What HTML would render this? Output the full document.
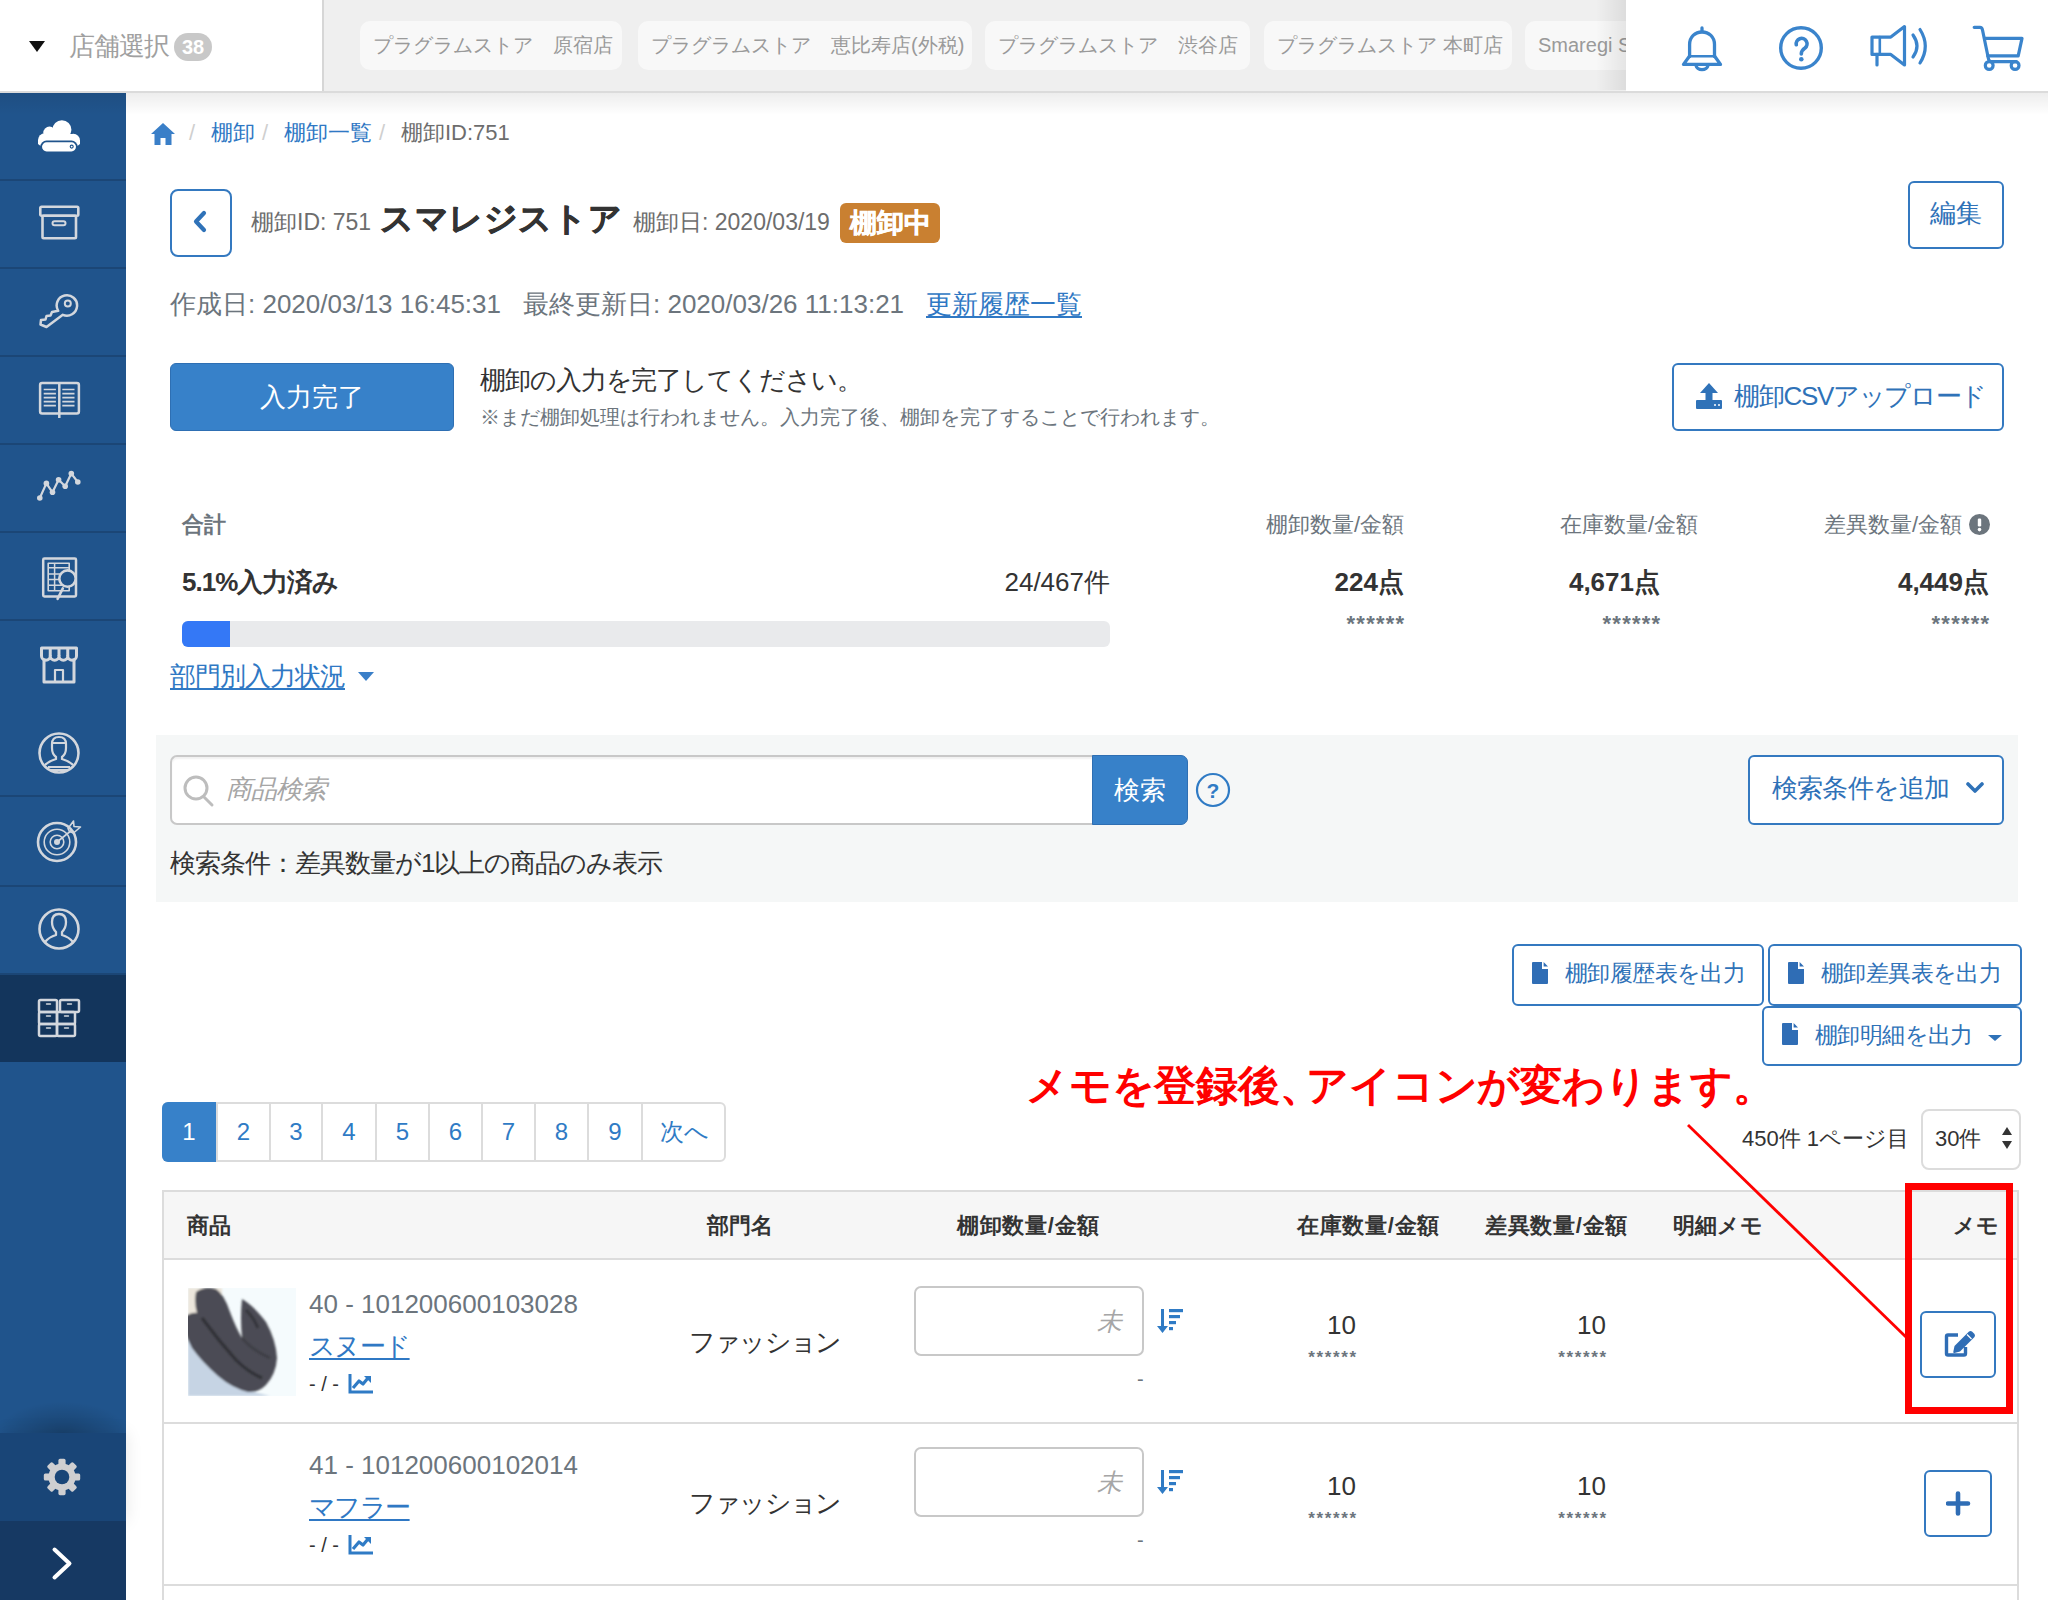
<!DOCTYPE html>
<html><head><meta charset="utf-8">
<style>
*{box-sizing:border-box;margin:0;padding:0}
html,body{width:2048px;height:1600px;overflow:hidden;background:#fff}
body{font-family:"Liberation Sans",sans-serif;color:#333;position:relative}
.a{position:absolute;white-space:nowrap}
.blue{color:#2f78c4}
.gray{color:#6d757d}
/* header */
#hdr{position:absolute;left:0;top:0;width:2048px;height:93px;background:#fff;border-bottom:2px solid #dbdbdb;z-index:5}
#hdrshadow{position:absolute;left:0;top:93px;width:2048px;height:22px;background:linear-gradient(#00000012,#00000000);z-index:4}
#tabs{position:absolute;left:322px;top:0;width:1304px;height:91px;background:#efefef;border-left:2px solid #d6d6d6;overflow:hidden}
.chip{position:absolute;top:21px;height:49px;background:#f8f8f8;border-radius:10px;color:#9a9a9a;font-size:20px;line-height:49px;padding-left:13px}
#tabfade{position:absolute;right:0;top:0;width:30px;height:90px;background:linear-gradient(90deg,rgba(0,0,0,0),rgba(0,0,0,0.08))}
/* sidebar */
#side{position:absolute;left:0;top:93px;width:126px;height:1507px;background:#20548c;z-index:3}
.sitem{position:absolute;left:0;width:126px;height:88px;border-bottom:2px solid #1b4676}
.sitem svg{position:absolute;left:33px;top:17px}
/* buttons */
.obtn{position:absolute;border:2px solid #3479c0;border-radius:6px;background:#fff;color:#2f72b8}
.th{font-size:22px;line-height:30px;color:#333;font-weight:bold}
</style></head>
<body>
<div id="hdr">
  <div class="a" style="left:29px;top:41px;width:0;height:0;border-left:8px solid transparent;border-right:8px solid transparent;border-top:11px solid #111"></div>
  <div class="a" style="left:69px;top:30px;font-size:26px;color:#a0a0a0;line-height:32px;letter-spacing:-1px">店舗選択</div>
  <div class="a" style="left:174px;top:33px;width:38px;height:28px;border-radius:14px;background:#c8c8c8;color:#fff;font-weight:bold;font-size:20px;line-height:28px;text-align:center">38</div>
  <div id="tabs">
    <div class="chip" style="left:36px;width:262px">プラグラムストア　原宿店</div>
    <div class="chip" style="left:314px;width:334px">プラグラムストア　恵比寿店(外税)</div>
    <div class="chip" style="left:661px;width:265px">プラグラムストア　渋谷店</div>
    <div class="chip" style="left:940px;width:248px">プラグラムストア 本町店</div>
    <div class="chip" style="left:1201px;width:200px">Smaregi Store</div>
    <div id="tabfade"></div>
  </div>
</div>
<div id="hdrshadow"></div>

<div id="side">
  <div class="sitem" style="top:0"><svg width="46" height="38" viewBox="0 0 46 38" style="left:36px;top:24px"><g fill="#fff"><circle cx="25.9" cy="12.8" r="9.5"/><circle cx="13.5" cy="15.8" r="6.2"/><circle cx="8.8" cy="23" r="6.8"/><circle cx="37.3" cy="23.5" r="6.7"/><rect x="8" y="17" width="30" height="11"/><path d="M2 23 H44 V27 L40 30 H6 L2 27 Z"/></g><rect x="4.3" y="23.6" width="37.4" height="12.4" rx="6.2" fill="#20548c"/><rect x="6" y="25.3" width="34" height="9.1" rx="4.55" fill="#fff"/><circle cx="35.7" cy="29.6" r="1.5" fill="none" stroke="#20548c" stroke-width="1.1"/></svg></div>
  <div class="sitem" style="top:88px"><svg width="44" height="38" viewBox="0 0 44 38" style="left:37px;top:23px" fill="none" stroke="#d3d7dd" stroke-width="2.6" stroke-linejoin="round"><rect x="3.3" y="2.8" width="38" height="9" rx="1.2"/><rect x="5.5" y="11.8" width="33.5" height="22.5" rx="1.2"/><rect x="15.5" y="17.3" width="13" height="4" rx="2" stroke-width="2"/></svg></div>
  <div class="sitem" style="top:176px"><svg width="44" height="38" viewBox="0 0 44 38" style="left:37px;top:24px" fill="none" stroke="#d3d7dd" stroke-width="2.5" stroke-linejoin="round"><path d="M9.5 34 L3.5 31.5 L4 27 L8.5 26.5 L9.5 23 L13.5 22.5 L15 19 L21.2 17.8 A10.2 10.2 0 1 1 25.8 21.8 Z"/><circle cx="30.8" cy="10.6" r="3" stroke-width="2"/></svg></div>
  <div class="sitem" style="top:264px"><svg width="44" height="40" viewBox="0 0 44 40" style="left:37px;top:24px" fill="none" stroke="#d3d7dd" stroke-width="2.5" stroke-linejoin="round"><rect x="3.1" y="2" width="38.8" height="30.5" rx="2"/><path d="M22.3 1.5 V37"/><g stroke-width="1.7"><path d="M6.7 8.5H18.9M6.7 12.6H18.9M6.7 16.6H18.9M6.7 20.6H18.9M6.7 24.6H18.9M25.3 8.5H37.5M25.3 12.6H37.5M25.3 16.6H37.5M25.3 20.6H37.5M25.3 24.6H37.5"/></g></svg></div>
  <div class="sitem" style="top:352px"><svg width="46" height="34" viewBox="0 0 46 34" style="left:36px;top:25px" fill="none" stroke="#d3d7dd" stroke-width="2.2" stroke-linejoin="round"><polyline points="3.8,28 10.4,13.4 16.5,22.3 22.6,9.7 29.2,16.3 35.3,3.6 41.8,12"/><g fill="#d3d7dd" stroke="none"><circle cx="3.8" cy="28" r="2.8"/><circle cx="10.4" cy="13.4" r="2.8"/><circle cx="16.5" cy="22.3" r="2.8"/><circle cx="22.6" cy="9.7" r="2.8"/><circle cx="29.2" cy="16.3" r="2.8"/><circle cx="35.3" cy="3.6" r="2.8"/><circle cx="41.8" cy="12" r="2.8"/></g></svg></div>
  <div class="sitem" style="top:440px"><svg width="40" height="46" viewBox="0 0 40 46" style="left:40px;top:23px" fill="none" stroke="#d3d7dd" stroke-linejoin="round"><rect x="3.2" y="2.5" width="32.8" height="38" rx="1.2" stroke-width="2.5"/><rect x="8.2" y="7.2" width="21" height="27.6" stroke-width="1.6"/><path d="M14.6 7.2V34.8M8.2 11.8H29.2M8.2 17.9H29.2M8.2 23.5H29.2M8.2 29.2H29.2" stroke-width="1.5"/><circle cx="27.5" cy="22.6" r="8.2" fill="#20548c" stroke-width="2.6"/><path d="M22.8 32.4 L17.6 42.8" stroke-width="2.6" stroke-linecap="round"/></svg></div>
  <div class="sitem" style="top:528px;border-bottom-color:#20548c"><svg width="44" height="42" viewBox="0 0 44 42" style="left:37px;top:24px" fill="none" stroke="#d3d7dd" stroke-width="3" stroke-linejoin="round"><path d="M4.5 3 H39.5 V11 A4.375 4.2 0 0 1 30.75 11 A4.375 4.2 0 0 1 22 11 A4.375 4.2 0 0 1 13.25 11 A4.375 4.2 0 0 1 4.5 11 Z"/><path d="M13.25 3V11M22 3V11M30.75 3V11"/><path d="M7 13.5 V37 H37 V13.5"/><path d="M18 37 V25 H26 V37" stroke-width="2.2"/></svg></div>
  <div class="sitem" style="top:616px"><svg width="44" height="46" viewBox="0 0 44 46" style="left:37px;top:22px" fill="none" stroke="#d3d7dd" stroke-width="2.6"><circle cx="22" cy="22" r="19.5"/><path d="M15 13 Q15 6 22 6 Q29 6 29 13 L29 17 Q29 23 25 26 L25 28 Q32 30 36 34 M15 13 L15 17 Q15 23 19 26 L19 28 Q12 30 8 34" stroke-width="2.2"/><path d="M15 12 H29" stroke-width="2"/><path d="M11 36 H33 M12 39 H32" stroke-width="1.8"/></svg></div>
  <div class="sitem" style="top:706px"><svg width="46" height="44" viewBox="0 0 46 44" style="left:36px;top:20px" fill="none" stroke="#d3d7dd" stroke-width="2.6"><circle cx="21" cy="23" r="19"/><circle cx="21" cy="23" r="12.8" stroke-width="1.6"/><circle cx="21" cy="23" r="6.8" stroke-width="1.6"/><circle cx="21" cy="23" r="3" fill="#d3d7dd" stroke="none"/><path d="M21 23 L36 11" stroke-width="1.7"/><path d="M32 9.5 L37.5 2 L38 7.5 L44.5 8 L37.5 14 L33.5 12.5 Z" stroke-width="1.6" stroke-linejoin="round"/></svg></div>
  <div class="sitem" style="top:794px"><svg width="44" height="46" viewBox="0 0 44 46" style="left:37px;top:20px" fill="none" stroke="#d3d7dd" stroke-width="2.6"><circle cx="22" cy="22" r="19.5"/><path d="M8 35 Q12 30 19 28 L19 25 Q15 21 15 15 Q15 7 22 7 Q29 7 29 15 Q29 21 25 25 L25 28 Q32 30 36 35" stroke-width="2.3" stroke-linejoin="round"/></svg></div>
  <div class="sitem" style="top:882px;height:87px;background:#13355c;border-bottom:none"><svg width="44" height="42" viewBox="0 0 44 42" style="left:37px;top:23px" fill="none" stroke="#d3d7dd" stroke-width="2.5" stroke-linejoin="round"><rect x="2" y="2" width="18" height="12" rx="1.5"/><rect x="23" y="2" width="19" height="12" rx="1.5"/><rect x="2" y="14" width="18" height="12" rx="1.5"/><rect x="20" y="14" width="18" height="12" rx="1.5"/><rect x="2" y="26" width="18" height="12" rx="1.5"/><rect x="20" y="26" width="18" height="12" rx="1.5"/><path d="M9.5 6H13.5M30.5 6H34.5M9.5 18H13.5M27.5 18H31.5M9.5 30H13.5M27.5 30H31.5" stroke-width="1.4" stroke-linecap="round"/></svg></div>
  <div style="position:absolute;left:0;top:1298px;width:126px;height:42px;background:radial-gradient(ellipse 70% 100% at 50% 100%,rgba(0,0,0,0.22),rgba(0,0,0,0) 75%)"></div>
  <div style="position:absolute;left:0;top:1340px;width:126px;height:88px;background:#194577;box-shadow:0 0 16px rgba(0,0,0,0.10)"><svg width="40" height="40" viewBox="-20 -20 40 40" style="position:absolute;left:42px;top:24px"><g fill="#cfcfd1"><circle r="13.6"/><rect x="-3.6" y="-18.2" width="7.2" height="9" rx="1.6" transform="rotate(0)"/><rect x="-3.6" y="-18.2" width="7.2" height="9" rx="1.6" transform="rotate(45)"/><rect x="-3.6" y="-18.2" width="7.2" height="9" rx="1.6" transform="rotate(90)"/><rect x="-3.6" y="-18.2" width="7.2" height="9" rx="1.6" transform="rotate(135)"/><rect x="-3.6" y="-18.2" width="7.2" height="9" rx="1.6" transform="rotate(180)"/><rect x="-3.6" y="-18.2" width="7.2" height="9" rx="1.6" transform="rotate(225)"/><rect x="-3.6" y="-18.2" width="7.2" height="9" rx="1.6" transform="rotate(270)"/><rect x="-3.6" y="-18.2" width="7.2" height="9" rx="1.6" transform="rotate(315)"/></g><circle r="7.3" fill="#194577"/></svg></div>
  <div style="position:absolute;left:0;top:1428px;width:126px;height:79px;background:#163963"><svg width="30" height="40" viewBox="0 0 30 40" style="position:absolute;left:47px;top:22px"><path d="M7.5 6.5 L22.5 20.5 L7.5 34.5" fill="none" stroke="#fff" stroke-width="4" stroke-linecap="round" stroke-linejoin="round"/></svg></div>
</div>


<!-- header icons -->
<div class="a" style="left:1626px;top:0;width:422px;height:90px;background:#fff;z-index:6">
 <svg width="44" height="48" viewBox="0 0 44 48" style="position:absolute;left:54px;top:26px" fill="none" stroke="#3a84cc" stroke-width="3.3" stroke-linejoin="round" stroke-linecap="round"><path d="M22 2 V5.5"/><path d="M9.6 30.5 V18.5 C9.6 11 15 6 22 6 C29 6 34.5 11 34.5 18.5 V30.5"/><path d="M10 30.3 H34" stroke-width="2.4"/><path d="M9.6 30 L3.5 38.4 H40.5 L34.5 30"/><path d="M15.8 39 A6.3 5.6 0 0 0 28.2 39"/></svg>
 <svg width="48" height="50" viewBox="0 0 48 50" style="position:absolute;left:151px;top:23px" fill="none" stroke="#3a84cc" stroke-width="3.4"><circle cx="24" cy="25" r="20.3"/><path d="M19.3 21.8 A5.4 5.4 0 1 1 28 25 Q24.3 27.5 24.3 31" stroke-linecap="round" stroke-width="3.6"/><circle cx="24.3" cy="36.2" r="2.3" fill="#3a84cc" stroke="none"/></svg>
 <svg width="64" height="48" viewBox="0 0 64 48" style="position:absolute;left:243px;top:23px" fill="none" stroke="#3a84cc" stroke-width="3.2" stroke-linejoin="round" stroke-linecap="round"><path d="M3 14.1 H21.8 L35.5 3.6 V41.9 L21.8 31.4 H3 Z"/><path d="M10.8 14.1 V31.4" stroke-width="2.6"/><path d="M8 31.4 V42"/><path d="M44 12 Q52 23.2 44 34"/><path d="M51 6.5 Q61.6 23.2 51 40"/></svg>
 <svg width="56" height="50" viewBox="0 0 56 50" style="position:absolute;left:346px;top:24px" fill="none" stroke="#3a84cc" stroke-width="3.2" stroke-linejoin="round" stroke-linecap="round"><path d="M2.2 3.3 H8 Q10 3.3 10.5 6 L16.5 35 Q17 37.6 19.5 37.6 H44.4"/><path d="M12.8 14.3 H50 L46.2 31.9 H15.8"/><circle cx="17.2" cy="41.5" r="3.9"/><circle cx="43.1" cy="41.5" r="3.9"/></svg>
</div>

<!-- breadcrumb -->
<svg width="26" height="24" viewBox="0 0 26 24" style="position:absolute;left:150px;top:122px"><path d="M13 1 L25 12 H21.5 V23 H15.5 V16 H10.5 V23 H4.5 V12 H1 Z" fill="#3a7fc8"/></svg>
<div class="a" style="left:189px;top:119px;font-size:22px;line-height:28px;color:#cfcfcf">/</div>
<div class="a blue" style="left:211px;top:119px;font-size:22px;line-height:28px">棚卸</div>
<div class="a" style="left:262px;top:119px;font-size:22px;line-height:28px;color:#cfcfcf">/</div>
<div class="a blue" style="left:284px;top:119px;font-size:22px;line-height:28px">棚卸一覧</div>
<div class="a" style="left:379px;top:119px;font-size:22px;line-height:28px;color:#cfcfcf">/</div>
<div class="a" id="bc3" style="left:401px;top:119px;font-size:22px;line-height:28px;color:#6d6d6d">棚卸ID:751</div>

<!-- title row -->
<div class="obtn" style="left:170px;top:189px;width:62px;height:68px;border-radius:8px"><svg width="16" height="24" viewBox="0 0 16 24" style="position:absolute;left:20px;top:19px"><path d="M12 3 L4 11.5 L12 20" fill="none" stroke="#2f72b8" stroke-width="4.2" stroke-linecap="round" stroke-linejoin="round"/></svg></div>
<div class="a" id="t1" style="left:251px;top:207px;font-size:23px;line-height:30px;color:#6d6d6d">棚卸ID: 751</div>
<div class="a" id="t2" style="left:380px;top:199px;font-size:33px;line-height:40px;color:#333;font-weight:bold;letter-spacing:0.6px;-webkit-text-stroke:0.7px #333">スマレジストア</div>
<div class="a" id="t3" style="left:633px;top:207px;font-size:23px;line-height:30px;color:#6d6d6d">棚卸日: 2020/03/19</div>
<div class="a" style="left:840px;top:203px;width:100px;height:40px;background:#c98031;border-radius:6px;color:#fff;font-weight:bold;font-size:27px;line-height:40px;text-align:center;-webkit-text-stroke:0.5px #fff">棚卸中</div>
<div class="obtn" style="left:1908px;top:181px;width:96px;height:68px;font-size:26px;line-height:61px;text-align:center">編集</div>

<!-- dates -->
<div class="a" id="d1" style="left:170px;top:288px;font-size:26px;line-height:32px;color:#6c757d">作成日: 2020/03/13 16:45:31</div>
<div class="a" id="d2" style="left:523px;top:288px;font-size:26px;line-height:32px;color:#6c757d">最終更新日: 2020/03/26 11:13:21</div>
<div class="a blue" id="d3" style="left:926px;top:288px;font-size:26px;line-height:32px;text-decoration:underline;text-underline-offset:3px">更新履歴一覧</div>

<!-- complete -->
<div class="a" style="left:170px;top:363px;width:284px;height:68px;background:#3781c9;border:1px solid #2e6fb3;border-radius:6px;color:#fff;font-size:26px;line-height:66px;text-align:center">入力完了</div>
<div class="a" style="left:480px;top:364px;font-size:26px;line-height:32px;color:#333;letter-spacing:-1.1px">棚卸の入力を完了してください。</div>
<div class="a" id="note" style="left:480px;top:404px;font-size:19.7px;line-height:26px;color:#6c757d">※まだ棚卸処理は行われません。入力完了後、棚卸を完了することで行われます。</div>
<div class="obtn" style="left:1672px;top:363px;width:332px;height:68px;">
 <svg width="28" height="28" viewBox="0 0 28 28" style="position:absolute;left:21px;top:17px"><path d="M14 1 L23 11 H17.5 V20 H10.5 V11 H5 Z" fill="#2f72b8"/><rect x="1" y="18" width="26" height="9" rx="1" fill="#2f72b8"/><circle cx="20" cy="23" r="1" fill="#fff"/><circle cx="24" cy="23" r="1" fill="#fff"/></svg>
 <div class="a" id="csv" style="left:60px;top:13px;font-size:26px;letter-spacing:-1.3px;line-height:36px;color:#2f72b8">棚卸CSVアップロード</div>
</div>

<!-- summary -->
<div class="a" style="left:182px;top:511px;font-size:22px;line-height:28px;color:#6c757d;font-weight:bold">合計</div>
<div class="a" id="s1" style="left:182px;top:566px;font-size:26px;letter-spacing:-1px;line-height:32px;color:#333;font-weight:bold">5.1%入力済み</div>
<div class="a" id="s2" style="right:938px;top:566px;font-size:26px;line-height:32px;color:#333">24/467件</div>
<div class="a" style="left:182px;top:621px;width:928px;height:26px;background:#e9eaec;border-radius:6px;overflow:hidden"><div style="width:48px;height:26px;background:#3478f6"></div></div>
<div class="a blue" style="left:170px;top:660px;font-size:26px;line-height:32px;text-decoration:underline;text-underline-offset:3px;letter-spacing:-1px">部門別入力状況</div>
<div class="a" style="left:358px;top:672px;width:0;height:0;border-left:8px solid transparent;border-right:8px solid transparent;border-top:9px solid #3a7fc8"></div>

<div class="a" id="h1" style="right:644px;top:511px;font-size:22px;line-height:28px;color:#6c757d">棚卸数量/金額</div>
<div class="a" id="v1" style="right:644px;top:566px;font-size:26px;line-height:32px;color:#333;font-weight:bold">224点</div>
<div class="a" style="right:644px;top:612px;font-size:22px;line-height:24px;color:#6c757d;font-weight:bold;letter-spacing:1.2px;margin-right:-1.2px">******</div>
<div class="a" id="h2" style="right:350px;top:511px;font-size:22px;line-height:28px;color:#6c757d">在庫数量/金額</div>
<div class="a" id="v2" style="right:388px;top:566px;font-size:26px;line-height:32px;color:#333;font-weight:bold">4,671点</div>
<div class="a" style="right:388px;top:612px;font-size:22px;line-height:24px;color:#6c757d;font-weight:bold;letter-spacing:1.2px;margin-right:-1.2px">******</div>
<div class="a" id="h3" style="right:86px;top:511px;font-size:22px;line-height:28px;color:#6c757d">差異数量/金額</div>
<svg width="21" height="21" viewBox="0 0 21 21" style="position:absolute;left:1969px;top:514px"><circle cx="10.5" cy="10.5" r="10.5" fill="#6c757d"/><rect x="8.8" y="4.5" width="3.4" height="8" rx="1.2" fill="#fff"/><circle cx="10.5" cy="15.6" r="1.8" fill="#fff"/></svg>
<div class="a" id="v3" style="right:59px;top:566px;font-size:26px;line-height:32px;color:#333;font-weight:bold">4,449点</div>
<div class="a" style="right:59px;top:612px;font-size:22px;line-height:24px;color:#6c757d;font-weight:bold;letter-spacing:1.2px;margin-right:-1.2px">******</div>

<!-- search panel -->
<div class="a" style="left:156px;top:735px;width:1862px;height:167px;background:#f5f7f7"></div>
<div class="a" style="left:170px;top:755px;width:924px;height:70px;background:#fff;border:2px solid #c8c8c8;border-right:none;border-radius:7px 0 0 7px;box-shadow:inset 0 2px 2px rgba(0,0,0,0.06)"></div>
<svg width="32" height="34" viewBox="0 0 32 34" style="position:absolute;left:183px;top:775px" fill="none" stroke="#bdbdbd" stroke-width="3"><circle cx="13" cy="13" r="11"/><path d="M21 22 L29 30" stroke-linecap="round"/></svg>
<div class="a" style="left:226px;top:773px;font-size:26px;line-height:32px;color:#a6a6a6;font-style:italic;letter-spacing:-1px">商品検索</div>
<div class="a" style="left:1092px;top:755px;width:96px;height:70px;background:#3781c9;border:1px solid #2e6fb3;border-radius:0 7px 7px 0;color:#fff;font-size:26px;line-height:68px;text-align:center">検索</div>
<svg width="36" height="36" viewBox="0 0 36 36" style="position:absolute;left:1195px;top:772px"><circle cx="18" cy="18" r="16" fill="none" stroke="#2f7bc5" stroke-width="2.2"/><text x="18" y="26" text-anchor="middle" font-family="Liberation Sans" font-size="21" font-weight="bold" fill="#2f7bc5">?</text></svg>
<div class="obtn" style="left:1748px;top:755px;width:256px;height:70px">
 <div class="a" id="addc" style="left:22px;top:15px;font-size:26px;letter-spacing:-0.8px;line-height:32px;color:#2f72b8">検索条件を追加</div>
 <svg width="18" height="14" viewBox="0 0 18 14" style="position:absolute;left:216px;top:24px"><path d="M2 3 L9 10 L16 3" fill="none" stroke="#2f72b8" stroke-width="3.6" stroke-linecap="round" stroke-linejoin="round"/></svg>
</div>
<div class="a" id="cond" style="left:170px;top:847px;font-size:26px;line-height:32px;color:#333;letter-spacing:-1px">検索条件：差異数量が1以上の商品のみ表示</div>

<!-- export -->
<div class="obtn" style="left:1512px;top:944px;width:252px;height:62px">
 <svg width="18" height="24" viewBox="0 0 18 24" style="position:absolute;left:17px;top:15px"><path d="M1 2 Q1 1 2 1 H11 V8 H17 V22 Q17 23 16 23 H2 Q1 23 1 22 Z" fill="#2f6db5"/><path d="M12.6 1 L17 5.6 H12.6 Z" fill="#2f6db5"/></svg>
 <div class="a" id="e1" style="left:51px;top:12px;font-size:23px;line-height:30px;color:#2f72b8;letter-spacing:-0.6px">棚卸履歴表を出力</div>
</div>
<div class="obtn" style="left:1768px;top:944px;width:254px;height:62px">
 <svg width="18" height="24" viewBox="0 0 18 24" style="position:absolute;left:17px;top:15px"><path d="M1 2 Q1 1 2 1 H11 V8 H17 V22 Q17 23 16 23 H2 Q1 23 1 22 Z" fill="#2f6db5"/><path d="M12.6 1 L17 5.6 H12.6 Z" fill="#2f6db5"/></svg>
 <div class="a" id="e2" style="left:51px;top:12px;font-size:23px;line-height:30px;color:#2f72b8;letter-spacing:-0.6px">棚卸差異表を出力</div>
</div>
<div class="obtn" style="left:1762px;top:1006px;width:260px;height:60px">
 <svg width="18" height="24" viewBox="0 0 18 24" style="position:absolute;left:17px;top:14px"><path d="M1 2 Q1 1 2 1 H11 V8 H17 V22 Q17 23 16 23 H2 Q1 23 1 22 Z" fill="#2f6db5"/><path d="M12.6 1 L17 5.6 H12.6 Z" fill="#2f6db5"/></svg>
 <div class="a" id="e3" style="left:51px;top:12px;font-size:23px;line-height:30px;color:#2f72b8;letter-spacing:-0.6px">棚卸明細を出力</div>
 <div class="a" style="left:224px;top:27px;width:0;height:0;border-left:7px solid transparent;border-right:7px solid transparent;border-top:6px solid #2f72b8"></div>
</div>

<!-- annotation -->
<div class="a" id="ann" style="left:1026px;top:1058px;font-size:42px;letter-spacing:-0.25px;line-height:56px;color:#ff0000;font-weight:bold">メモを登録後<span style="margin-right:-15px">、</span>アイコンが変わります。</div>

<!-- pagination -->
<div class="a" style="left:162px;top:1102px;width:564px;height:60px;border:2px solid #dcdcdc;border-radius:6px;background:#fff"></div>
<div class="a" style="left:162px;top:1102px;width:54px;height:60px;background:#3781c9;border-radius:6px 0 0 6px;color:#fff;font-size:24px;line-height:60px;text-align:center;z-index:1">1</div>
<div class="a" style="left:216px;top:1102px;width:53px;height:60px;border-left:2px solid #dcdcdc;color:#2f7bc5;font-size:24px;line-height:60px;text-align:center">2</div>
<div class="a" style="left:269px;top:1102px;width:52px;height:60px;border-left:2px solid #dcdcdc;color:#2f7bc5;font-size:24px;line-height:60px;text-align:center">3</div>
<div class="a" style="left:321px;top:1102px;width:54px;height:60px;border-left:2px solid #dcdcdc;color:#2f7bc5;font-size:24px;line-height:60px;text-align:center">4</div>
<div class="a" style="left:375px;top:1102px;width:53px;height:60px;border-left:2px solid #dcdcdc;color:#2f7bc5;font-size:24px;line-height:60px;text-align:center">5</div>
<div class="a" style="left:428px;top:1102px;width:53px;height:60px;border-left:2px solid #dcdcdc;color:#2f7bc5;font-size:24px;line-height:60px;text-align:center">6</div>
<div class="a" style="left:481px;top:1102px;width:53px;height:60px;border-left:2px solid #dcdcdc;color:#2f7bc5;font-size:24px;line-height:60px;text-align:center">7</div>
<div class="a" style="left:534px;top:1102px;width:53px;height:60px;border-left:2px solid #dcdcdc;color:#2f7bc5;font-size:24px;line-height:60px;text-align:center">8</div>
<div class="a" style="left:587px;top:1102px;width:54px;height:60px;border-left:2px solid #dcdcdc;color:#2f7bc5;font-size:24px;line-height:60px;text-align:center">9</div>
<div class="a" style="left:641px;top:1102px;width:85px;height:60px;border-left:2px solid #dcdcdc;color:#2f7bc5;font-size:24px;line-height:60px;text-align:center">次へ</div>

<div class="a" id="cnt" style="left:1742px;top:1124px;font-size:22px;line-height:30px;color:#333">450件 1ページ目</div>
<div class="a" style="left:1921px;top:1109px;width:100px;height:61px;border:2px solid #dcdcdc;border-radius:8px;background:#fff">
 <div class="a" style="left:12px;top:13px;font-size:22px;line-height:30px;color:#333">30件</div>
 <svg width="14" height="28" viewBox="0 0 14 28" style="position:absolute;left:77px;top:13px"><path d="M2 11 L7 3 L12 11 Z M2 17 L7 25 L12 17 Z" fill="#333"/></svg>
</div>

<!-- table -->
<div class="a" style="left:162px;top:1190px;width:1857px;height:420px;border:2px solid #dcdcdc;border-bottom:none"></div>
<div class="a" style="left:164px;top:1192px;width:1853px;height:68px;background:#f6f6f6;border-bottom:2px solid #dcdcdc"></div>
<div class="a" style="left:164px;top:1422px;width:1853px;height:2px;background:#dcdcdc"></div>
<div class="a" style="left:164px;top:1584px;width:1853px;height:2px;background:#dcdcdc"></div>
<div class="a th" style="left:187px;top:1211px">商品</div>
<div class="a th" style="left:707px;top:1211px">部門名</div>
<div class="a th" id="th3" style="left:957px;top:1211px;letter-spacing:0.7px">棚卸数量/金額</div>
<div class="a th" id="th4" style="left:1297px;top:1211px;letter-spacing:0.7px">在庫数量/金額</div>
<div class="a th" id="th5" style="left:1485px;top:1211px;letter-spacing:0.7px">差異数量/金額</div>
<div class="a th" style="left:1673px;top:1211px">明細メモ</div>
<div class="a th" style="left:1953px;top:1211px">メモ</div>
<div class="a" style="left:188px;top:1288px;width:108px;height:108px;overflow:hidden"><svg width="108" height="108" viewBox="0 0 108 108"><defs><filter id="blr" x="-10%" y="-10%" width="120%" height="120%"><feGaussianBlur stdDeviation="1.1"/></filter></defs><rect width="108" height="108" fill="#f5fbfd"/><g filter="url(#blr)"><rect x="0" y="0" width="34" height="30" fill="#ece6dc"/><path d="M0 40 Q30 70 50 100 L82 108 L0 108 Z" fill="#c6d4e4"/><path d="M8 4 Q16 -2 28 1 Q36 6 42 24 Q48 40 54 50 Q52 30 54 11 Q66 18 78 34 Q88 52 89 70 Q88 86 78 97 Q70 105 60 104 Q44 100 30 88 Q14 74 4 60 Q0 52 -2 46 L-2 28 Q4 24 9 25 Q6 14 8 4 Z" fill="#4b4c54"/><path d="M14 30 Q30 52 48 72 Q60 84 74 90" stroke="#2e2f35" stroke-width="3" fill="none"/><path d="M58 22 Q66 30 70 40" stroke="#34353b" stroke-width="3" fill="none"/><path d="M54 50 Q64 62 82 70" stroke="#3c3d44" stroke-width="2.5" fill="none"/></g></svg></div>
<div class="a" style="left:309px;top:1288px;font-size:26px;line-height:32px;color:#6c757d">40 - 101200600103028</div>
<div class="a blue" style="left:309px;top:1330px;font-size:26px;line-height:32px;text-decoration:underline;text-underline-offset:3px;letter-spacing:-1.6px">スヌード</div>
<div class="a" style="left:309px;top:1370px;font-size:20px;line-height:28px;color:#333">- / -</div>
<svg width="26" height="21" viewBox="0 0 26 21" style="position:absolute;left:348px;top:1373px"><path d="M2 1 V19 H25" fill="none" stroke="#2f7bc5" stroke-width="3"/><path d="M5 15 L11 8 L15 11 L20 5" fill="none" stroke="#2f7bc5" stroke-width="3.2" stroke-linejoin="round"/><path d="M16 3 H23 V10 Z" fill="#2f7bc5"/></svg>
<div class="a" style="left:689px;top:1326px;font-size:26px;line-height:32px;color:#333;letter-spacing:-1.8px">ファッション</div>
<div class="a" style="left:914px;top:1286px;width:230px;height:70px;border:2px solid #c8c8c8;border-radius:7px;background:#fff"></div>
<div class="a" style="left:1097px;top:1306px;font-size:25px;line-height:30px;color:#a6a6a6;font-style:italic">未</div>
<svg width="28" height="26" viewBox="0 0 28 26" style="position:absolute;left:1156px;top:1308px" fill="#2f7bc5"><path d="M5 1 V18 H1 L6.5 25 L12 18 H8 V1 Z"/><rect x="13" y="1" width="14" height="3.2"/><rect x="13" y="7" width="11" height="3.2"/><rect x="13" y="13" width="7" height="3.2"/><rect x="13" y="19" width="4" height="3.2"/></svg>
<div class="a" style="left:1137px;top:1366px;font-size:20px;line-height:26px;color:#6c757d">-</div>
<div class="a" style="right:692px;top:1309px;font-size:26px;line-height:32px;color:#333">10</div>
<div class="a" style="right:692px;top:1348px;font-size:17px;line-height:20px;color:#6c757d;font-weight:bold;letter-spacing:1.6px;margin-right:-1.6px">******</div>
<div class="a" style="right:442px;top:1309px;font-size:26px;line-height:32px;color:#333">10</div>
<div class="a" style="right:442px;top:1348px;font-size:17px;line-height:20px;color:#6c757d;font-weight:bold;letter-spacing:1.6px;margin-right:-1.6px">******</div>
<div class="a" style="left:309px;top:1449px;font-size:26px;line-height:32px;color:#6c757d">41 - 101200600102014</div>
<div class="a blue" style="left:309px;top:1491px;font-size:26px;line-height:32px;text-decoration:underline;text-underline-offset:3px;letter-spacing:-1.6px">マフラー</div>
<div class="a" style="left:309px;top:1531px;font-size:20px;line-height:28px;color:#333">- / -</div>
<svg width="26" height="21" viewBox="0 0 26 21" style="position:absolute;left:348px;top:1534px"><path d="M2 1 V19 H25" fill="none" stroke="#2f7bc5" stroke-width="3"/><path d="M5 15 L11 8 L15 11 L20 5" fill="none" stroke="#2f7bc5" stroke-width="3.2" stroke-linejoin="round"/><path d="M16 3 H23 V10 Z" fill="#2f7bc5"/></svg>
<div class="a" style="left:689px;top:1487px;font-size:26px;line-height:32px;color:#333;letter-spacing:-1.8px">ファッション</div>
<div class="a" style="left:914px;top:1447px;width:230px;height:70px;border:2px solid #c8c8c8;border-radius:7px;background:#fff"></div>
<div class="a" style="left:1097px;top:1467px;font-size:25px;line-height:30px;color:#a6a6a6;font-style:italic">未</div>
<svg width="28" height="26" viewBox="0 0 28 26" style="position:absolute;left:1156px;top:1469px" fill="#2f7bc5"><path d="M5 1 V18 H1 L6.5 25 L12 18 H8 V1 Z"/><rect x="13" y="1" width="14" height="3.2"/><rect x="13" y="7" width="11" height="3.2"/><rect x="13" y="13" width="7" height="3.2"/><rect x="13" y="19" width="4" height="3.2"/></svg>
<div class="a" style="left:1137px;top:1527px;font-size:20px;line-height:26px;color:#6c757d">-</div>
<div class="a" style="right:692px;top:1470px;font-size:26px;line-height:32px;color:#333">10</div>
<div class="a" style="right:692px;top:1509px;font-size:17px;line-height:20px;color:#6c757d;font-weight:bold;letter-spacing:1.6px;margin-right:-1.6px">******</div>
<div class="a" style="right:442px;top:1470px;font-size:26px;line-height:32px;color:#333">10</div>
<div class="a" style="right:442px;top:1509px;font-size:17px;line-height:20px;color:#6c757d;font-weight:bold;letter-spacing:1.6px;margin-right:-1.6px">******</div>
<div class="obtn" style="left:1920px;top:1311px;width:76px;height:67px"><svg width="34" height="30" viewBox="0 0 34 30" style="position:absolute;left:22px;top:17px"><path d="M14 5 H4 Q2.5 5 2.5 6.5 V23.5 Q2.5 25 4 25 H20 Q21.5 25 21.5 23.5 V17" fill="none" stroke="#2f6db5" stroke-width="3.4"/><path d="M25 1.5 Q26.5 0.5 28 1.5 L30.5 4 Q31.5 5.5 30.5 7 L16 21.5 L10.5 23 Q9 23.3 9.3 21.8 L10.5 16 Z" fill="#2f6db5"/><path d="M23 4.5 L27.5 9" stroke="#fff" stroke-width="1.3"/></svg></div>
<div class="obtn" style="left:1924px;top:1470px;width:68px;height:67px"><svg width="26" height="26" viewBox="0 0 26 26" style="position:absolute;left:20px;top:19px"><path d="M12 2.5 V22.5 M2 12.5 H22" stroke="#2f6db5" stroke-width="4.6" stroke-linecap="round"/></svg></div>


<!-- red annotation overlay -->
<svg width="2048" height="1600" style="position:absolute;left:0;top:0;z-index:9;pointer-events:none"><line x1="1688" y1="1125" x2="1907" y2="1338" stroke="#ff0000" stroke-width="2.8"/></svg>
<div class="a" style="left:1905px;top:1183px;width:108px;height:231px;border:7px solid #ff0000;z-index:9"></div>
</body></html>
